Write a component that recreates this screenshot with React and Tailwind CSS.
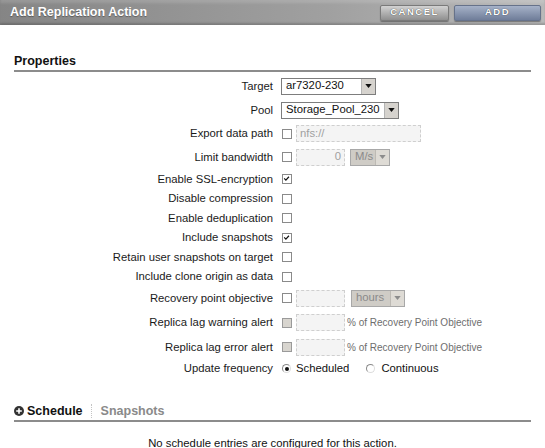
import React from "react";

const font = { fontFamily: '"Liberation Sans", Arial, sans-serif' };

function Box({ checked, disabled }) {
  return (
    <span
      className={`relative ml-px inline-block h-[10px] w-[10px] shrink-0 border ${
        disabled ? "border-[#9a9a9a] bg-[#d8d5cf]" : "border-[#8a8a8a] bg-white"
      }`}
    >
      {checked && (
        <svg viewBox="0 0 10 10" className="absolute left-0 top-0 h-[8px] w-[8px]">
          <path d="M1.5 4.2 L3.6 6.4 L7.4 2.2" fill="none" stroke="#111" strokeWidth="1.5" />
        </svg>
      )}
    </span>
  );
}

function Arrow({ disabled }) {
  return (
    <span
      className={`flex h-full w-[14px] items-center justify-center border-l ${
        disabled ? "border-[#bdbab4] bg-[#dedbd5]" : "border-[#b5b5b5] bg-[#d6d3ce]"
      }`}
    >
      <svg viewBox="0 0 8 5" className="h-[4px] w-[7px]">
        <path d="M0 0 L8 0 L4 5 Z" fill={disabled ? "#8c8c8c" : "#111"} />
      </svg>
    </span>
  );
}

function Select({ value, width, disabled }) {
  return (
    <span
      className={`flex h-[17px] items-center border ${
        disabled ? "border-[#a8a8a8] bg-[#cfccc6] text-[#8a8a8a]" : "border-[#7d7d7d] bg-white text-[#111]"
      }`}
      style={{ width }}
    >
      <span className="flex-1 truncate pl-[4px] leading-none">{value}</span>
      <Arrow disabled={disabled} />
    </span>
  );
}

function Field({ width, value, right }) {
  return (
    <span
      className={`flex h-[17px] items-center border border-dashed border-[#cfcfcf] bg-[#f4f4f4] px-[3px] leading-none text-[#a0a0a0] ${
        right ? "justify-end" : ""
      }`}
      style={{ width }}
    >
      {value}
    </span>
  );
}

function Radio({ on }) {
  return (
    <span className="relative inline-block h-[9px] w-[9px] shrink-0 rounded-full border border-[#8a8a8a] border-b-[#dcdcdc] border-r-[#dcdcdc] bg-white">
      {on && <span className="absolute left-[1.5px] top-[1.5px] h-[4px] w-[4px] rounded-full bg-[#111]" />}
    </span>
  );
}

function Row({ label, h, children }) {
  return (
    <div className="flex items-center" style={{ height: h }}>
      <div className="w-[273px] shrink-0 text-right text-[#1a1a1a]">{label}</div>
      <div className="ml-[8px] flex items-center">{children}</div>
    </div>
  );
}

export default function App() {
  return (
    <div className="h-[448px] w-[545px] overflow-hidden bg-white text-[11.3px]" style={font}>
      {/* header */}
      <div className="flex h-[25px] items-center justify-between bg-[linear-gradient(to_right,#858585,#a0a0a0_60%,#bababa)] shadow-[inset_0_-2px_2px_rgba(0,0,0,0.18),inset_0_3px_3px_rgba(255,255,255,0.15)]">
        <div className="pl-[10px] text-[12.5px] font-bold text-white [text-shadow:0_1px_1px_rgba(0,0,0,0.35)]">
          Add Replication Action
        </div>
        <div className="flex gap-[5px] pr-[4px]">
          <div className="flex h-[16px] w-[69px] items-center justify-center rounded-[2px] border border-[#7a7a7a] bg-[linear-gradient(#d2d2d2,#8f8f8f)] text-[9.5px] font-bold tracking-[1.5px] text-white shadow-[0_1px_1px_rgba(0,0,0,0.35)] [text-shadow:0_0_1px_rgba(0,0,0,0.9)]">
            CANCEL
          </div>
          <div className="flex h-[16px] w-[87px] items-center justify-center rounded-[2px] border border-[#66728a] bg-[linear-gradient(#a6b2c8,#6f7d99)] text-[9.5px] font-bold tracking-[1.5px] text-white shadow-[0_1px_1px_rgba(0,0,0,0.35)] [text-shadow:0_0_1px_rgba(0,0,0,0.8)]">
            ADD
          </div>
        </div>
      </div>

      {/* Properties heading */}
      <div className="mx-[14px] mt-[27px] flex h-[20px] items-center border-b-2 border-[#8c8c8c] text-[12.5px] font-bold text-[#111]">
        Properties
      </div>

      <div className="mt-[2px] flex flex-col">
        <Row label="Target" h={24}>
          <Select value="ar7320-230" width={95} />
        </Row>
        <Row label="Pool" h={24}>
          <Select value="Storage_Pool_230" width={118} />
        </Row>
        <Row label="Export data path" h={23}>
          <Box />
          <span className="ml-[4px]">
            <Field width={125} value="nfs://" />
          </span>
        </Row>
        <Row label="Limit bandwidth" h={24}>
          <Box />
          <span className="ml-[4px] flex items-center gap-[5px]">
            <Field width={49} value="0" right />
            <Select value="M/s" width={40} disabled />
          </span>
        </Row>
        <Row label="Enable SSL-encryption" h={20}>
          <Box checked />
        </Row>
        <Row label="Disable compression" h={19}>
          <Box />
        </Row>
        <Row label="Enable deduplication" h={20}>
          <Box />
        </Row>
        <Row label="Include snapshots" h={19}>
          <Box checked />
        </Row>
        <Row label="Retain user snapshots on target" h={20}>
          <Box />
        </Row>
        <Row label="Include clone origin as data" h={19}>
          <Box />
        </Row>
        <Row label="Recovery point objective" h={24}>
          <Box />
          <span className="ml-[4px] flex items-center gap-[6px]">
            <Field width={49} value="" />
            <Select value="hours" width={54} disabled />
          </span>
        </Row>
        <Row label="Replica lag warning alert" h={25}>
          <Box disabled />
          <span className="ml-[4px] flex items-center gap-[2px]">
            <Field width={49} value="" />
            <span className="text-[10px] text-[#6e6e6e]">% of Recovery Point Objective</span>
          </span>
        </Row>
        <Row label="Replica lag error alert" h={24}>
          <Box disabled />
          <span className="ml-[4px] flex items-center gap-[2px]">
            <Field width={49} value="" />
            <span className="text-[10px] text-[#6e6e6e]">% of Recovery Point Objective</span>
          </span>
        </Row>
        <Row label="Update frequency" h={19}>
          <span className="ml-[1px] flex items-center">
            <Radio on />
            <span className="ml-[5px] text-[#111]">Scheduled</span>
            <span className="ml-[17px] flex items-center">
              <Radio />
            </span>
            <span className="ml-[6px] text-[#111]">Continuous</span>
          </span>
        </Row>
      </div>

      {/* Schedule heading */}
      <div className="mx-[14px] mt-[24px] flex h-[20px] items-center border-b-2 border-[#8c8c8c] text-[12.5px] font-bold">
        <svg viewBox="0 0 10 10" className="h-[10px] w-[10px]">
          <circle cx="5" cy="5" r="5" fill="#333" />
          <path d="M5 2.2 V7.8 M2.2 5 H7.8" stroke="#fff" strokeWidth="1.6" />
        </svg>
        <span className="ml-[3px] text-[#111]">Schedule</span>
        <span className="ml-[8px] h-[14px] border-l border-dotted border-[#c4c4c4]" />
        <span className="ml-[9px] text-[#8a8a8a]">Snapshots</span>
      </div>

      <div className="mt-[13px] text-center text-[#111]">
        No schedule entries are configured for this action.
      </div>
    </div>
  );
}
